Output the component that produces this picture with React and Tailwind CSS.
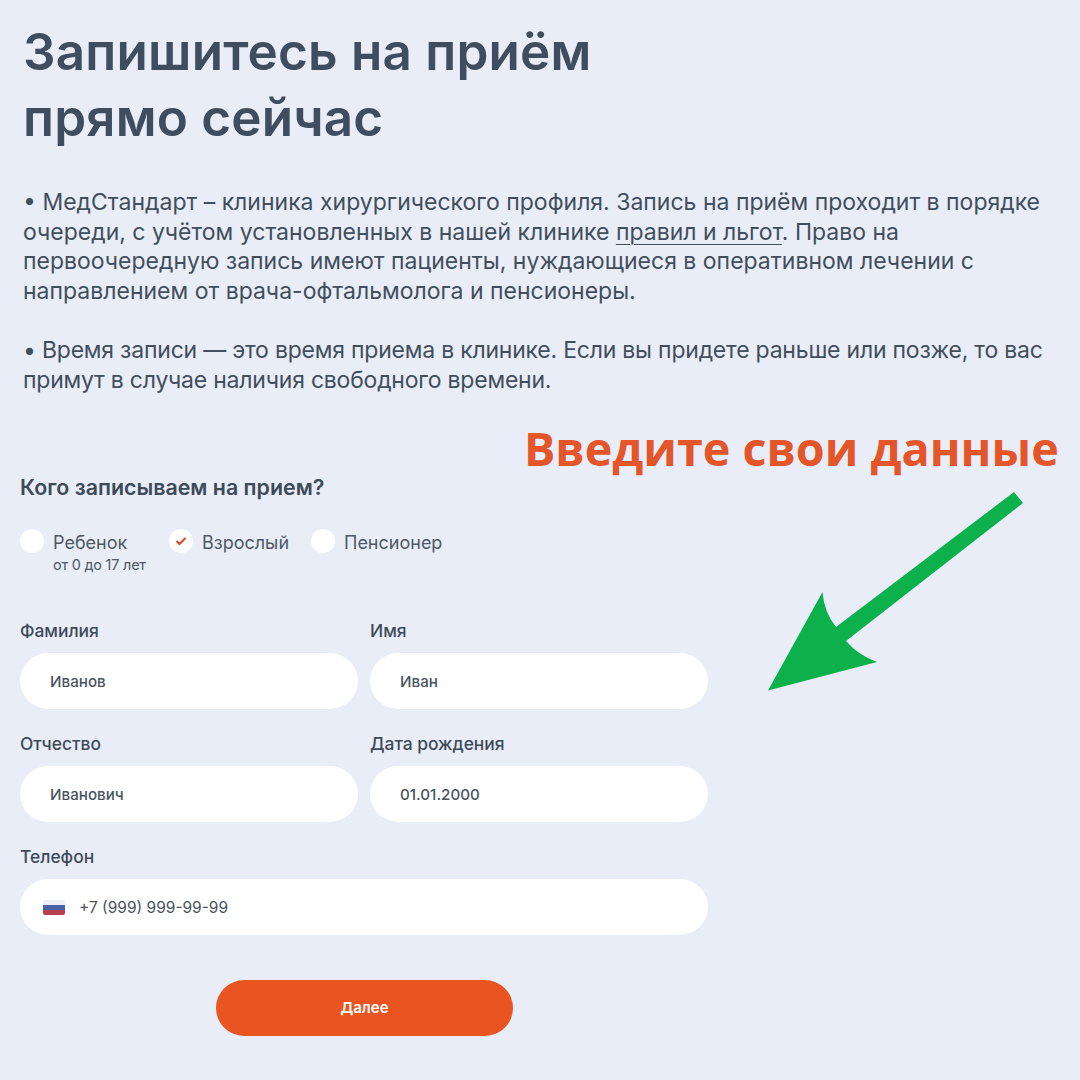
import React from 'react'

const Field = ({ label, value, className = '' }) => (
  <div className={className}>
    <p className="text-[17.4px] leading-[20px] font-medium text-[#3f4a58]">{label}</p>
    <div className="mt-[12px] h-[56px] rounded-full bg-white flex items-center pl-[30px] pt-[2px] text-[15.2px] font-medium text-[#4a5360]">
      {value}
    </div>
  </div>
)

const Radio = ({ label, note, checked, className = '' }) => (
  <div className={`flex items-start ${className}`}>
    <div className="w-[24px] h-[24px] rounded-full bg-white flex items-center justify-center shrink-0">
      {checked && (
        <svg width="12" height="10" viewBox="0 0 12 10" fill="none">
          <path d="M1.5 5 L4.5 8 L10.5 2" stroke="#d0492a" strokeWidth="2" />
        </svg>
      )}
    </div>
    <div className="ml-[9px] pt-[1px]">
      <p className="text-[18px] leading-[26px] text-[#4f5864]">{label}</p>
      {note && <p className="text-[14.4px] leading-[17px] text-[#4f5864] tracking-[-0.2px]">{note}</p>}
    </div>
  </div>
)

export default function App() {
  return (
    <div
      className="relative w-[1080px] h-[1080px] overflow-hidden bg-[#e8edf8] pt-[18px]"
      style={{ fontFamily: '"Inter", "Noto Sans", sans-serif' }}
    >
      <h1 className="ml-[23px] text-[51.2px] leading-[66px] font-semibold text-[#3f4d5e] tracking-[0.2px]">
        Запишитесь на приём
        <br />
        прямо сейчас
      </h1>

      <div className="mt-[38px] ml-[23px] w-[1040px] text-[23px] leading-[29.6px] text-[#434e5c]">
        <p>
          • МедСтандарт – клиника хирургического профиля. Запись на приём проходит в порядке
          <br />
          очереди, с учётом установленных в нашей клинике{' '}
          <span className="underline underline-offset-4 decoration-1">правил и льгот</span>. Право на
          <br />
          первоочередную запись имеют пациенты, нуждающиеся в оперативном лечении с
          <br />
          направлением от врача-офтальмолога и пенсионеры.
        </p>
        <p className="mt-[29.6px] tracking-[-0.22px]">
          • Время записи — это время приема в клинике. Если вы придете раньше или позже, то вас
          <br />
          примут в случае наличия свободного времени.
        </p>
      </div>

      <div className="mt-[79px] ml-[20px] w-[688px]">
        <p className="text-[21.4px] leading-[26px] font-semibold text-[#3f4a58]">Кого записываем на прием?</p>

        <div className="mt-[29px] h-[62px] flex">
          <Radio label="Ребенок" note="от 0 до 17 лет" className="w-[149px]" />
          <Radio label="Взрослый" checked className="w-[142px]" />
          <Radio label="Пенсионер" />
        </div>

        <div className="mt-[30px] grid grid-cols-2 gap-x-[12px] gap-y-[25px]">
          <Field label="Фамилия" value="Иванов" />
          <Field label="Имя" value="Иван" />
          <Field label="Отчество" value="Иванович" />
          <Field label="Дата рождения" value="01.01.2000" />
          <div className="col-span-2">
            <p className="text-[17.4px] leading-[20px] font-medium text-[#3f4a58]">Телефон</p>
            <div className="mt-[12px] h-[56px] rounded-full bg-white flex items-center pl-[23px] text-[15.5px] text-[#4a5360]">
              <div className="w-[22px] h-[15px] rounded-[2px] overflow-hidden flex flex-col">
                <div className="flex-1 bg-[#eef0f6]" />
                <div className="flex-1 bg-[#4a62a8]" />
                <div className="flex-1 bg-[#b8404a]" />
              </div>
              <span className="ml-[14px]">+7 (999) 999-99-99</span>
            </div>
          </div>
        </div>

        <div className="mt-[45px] ml-[196px] w-[297px] h-[56px] rounded-full bg-[#e95420] flex items-center justify-center text-[15px] font-semibold text-white">
          Далее
        </div>
      </div>

      <p
        className="absolute left-[524px] top-[418px] text-[46.7px] leading-[60px] font-bold text-[#e4562a] whitespace-nowrap"
        style={{ fontFamily: '"Open Sans", sans-serif' }}
      >
        Введите свои данные
      </p>

      <svg className="absolute left-0 top-0 pointer-events-none" width="1080" height="1080" viewBox="0 0 1080 1080">
        <path d="M768 690.5 L822.5 592 Q824 612 836 627 L1014 492 L1023 503 L846 641 Q858 655 877 662 Z" fill="#0cb14b" />
      </svg>
    </div>
  )
}
